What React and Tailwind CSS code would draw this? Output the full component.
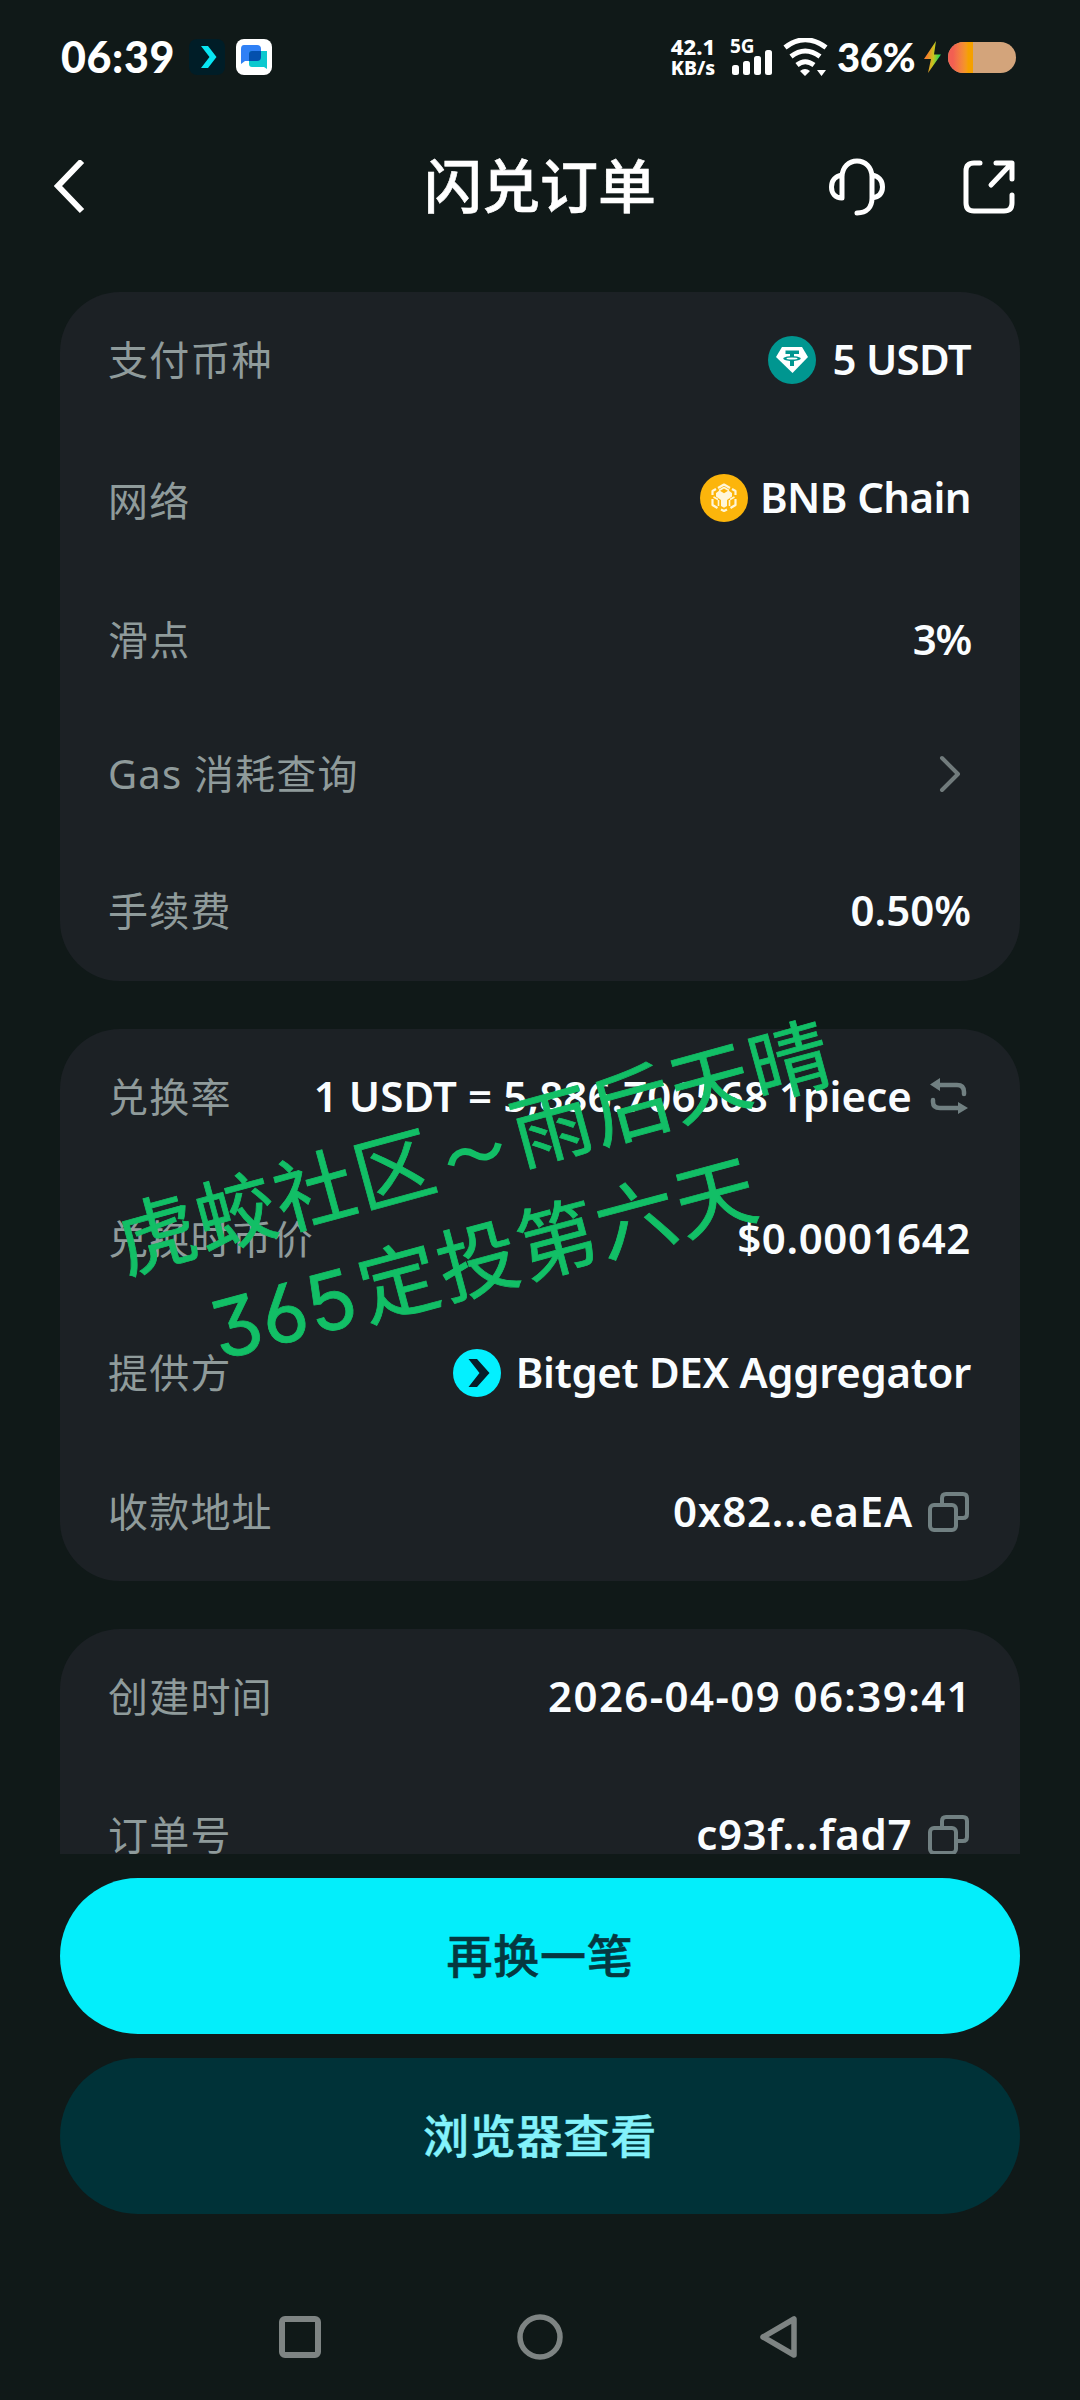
function StatusBar() {
  return (
    <div className="flex h-[114px] items-center pl-[61px] pr-[64px] text-white">
      <span className='w-[114px] whitespace-nowrap pb-[2px] font-["Lato","Noto_Sans_CJK_SC",sans-serif] text-[43px] font-black leading-none tracking-[0.6px]'>06:39</span>
      <svg className="ml-[14px] block" width="36" height="36" viewBox="0 0 36 36">
        <rect width="36" height="36" rx="8" fill="#001d27" />
        <path d="M12 7h7l8.500 11-8.500 11h-7l8.500-11z" fill="#08e6f4" />
      </svg>
      <svg className="ml-[11px] block" width="36" height="36" viewBox="0 0 36 36">
        <rect width="36" height="36" rx="8" fill="#fff" />
        <path d="M8 6h13q4 0 4 4v8q0 4-4 4H9l-4 3V10q0-4 3-4z" fill="#2f80f5" />
        <path d="M16 12h15v18l-3-2H16q-3 0-3-3V15q0-3 3-3z" fill="#0cc9cf" />
        <path d="M16 12h9v6q0 4-4 4h-8v-7q0-3 3-3z" fill="#0450ad" />
      </svg>
      <div className='ml-auto flex w-[46px] flex-col items-center font-["Noto_Sans",sans-serif] font-extrabold leading-[21px]'>
        <div className="whitespace-nowrap text-[22px]">42.1</div>
        <div className="whitespace-nowrap text-[19.5px]">KB/s</div>
      </div>
      <div className='relative ml-[14px] h-[38px] w-[44px] font-["Noto_Sans",sans-serif] text-[19px] font-bold leading-[16px]'>
        <span className="absolute left-0 top-0">5G</span>
        <svg className="block" width="44" height="38" viewBox="0 0 44 38">
          <g fill="#fff">
            <rect x="2" y="27" width="7" height="10" rx="2.500" />
            <rect x="13" y="23" width="7" height="14" rx="2.500" />
            <rect x="24" y="18" width="7" height="19" rx="2.500" />
            <rect x="35" y="12" width="7" height="25" rx="2.500" />
          </g>
        </svg>
      </div>
      <svg className="ml-[9px] block" width="46" height="38" viewBox="0 0 46 38" fill="none" stroke="#fff" strokeWidth="5">
        <path d="M2 9.500Q22-6 43 9.500M8 18.500q14-11 29 0M14 27q8-6.500 17 0" />
        <path d="M17 33q5-4 10 0l-5 5zM34 32h9l-4.500 6z" fill="#fff" stroke="none" />
      </svg>
      <span className='ml-[8px] w-[78px] whitespace-nowrap font-["Lato",sans-serif] text-[40px] font-black leading-none tracking-[-0.5px]'>36%</span>
      <svg className="ml-[9px] block" width="17" height="32" viewBox="0 0 17 32">
        <defs>
          <linearGradient id="bolt" x1="0" x2="1" y1="0.400" y2="0.600">
            <stop offset="0.200" stopColor="#f5822b" />
            <stop offset="0.550" stopColor="#c8c51e" />
            <stop offset="0.900" stopColor="#22d957" />
          </linearGradient>
        </defs>
        <path d="M12 0L0 18h7L4 32l13-18.500H10z" fill="url(#bolt)" />
      </svg>
      <div className="ml-[7px] h-[31px] w-[68px] overflow-hidden rounded-full bg-[#d3a47b]">
        <div className="h-full w-[25px] bg-linear-to-r from-[#f25f52] from-20% to-[#f5a000] to-80%" />
      </div>
    </div>
  );
}

function Header() {
  return (
    <div className="flex h-[146px] items-center pl-[54px] pr-[65px]">
      <svg className="block w-[170px]" width="170" height="54" viewBox="0 0 170 54" fill="none" stroke="#fff" strokeWidth="6">
        <path d="M28 1L4 26l24 25" />
      </svg>
      <h1 className='flex-1 pb-[9px] pl-[27px] text-center font-["Noto_Sans_CJK_SC",sans-serif] text-[58px] font-medium leading-none text-white [-webkit-text-stroke:0.6px]'>闪兑订单</h1>
      <svg className="block" width="56" height="58" viewBox="0 0 56 58" fill="none" stroke="#fff" strokeWidth="5" strokeLinecap="round" strokeLinejoin="round">
        <path d="M13 40V19C13 9 20 3 28 3s15 6 15 16v21c0 9-5 15-15 15M13 17C6 18 2.500 23 2.500 29S6 40 13 40M43 17c7 1 10.500 6 10.500 12S50 39 43 40" />
      </svg>
      <svg className="ml-[78px] block" width="52" height="54" viewBox="0 0 52 54" fill="none" stroke="#fff" strokeWidth="5" strokeLinecap="round" strokeLinejoin="round">
        <path d="M17 3h-6q-8 0-8 8v32q0 8 8 8h30q8 0 8-8v-8M33 3h16v16M48 4L28 25" />
      </svg>
    </div>
  );
}

const UsdtIcon = () => (
  <svg className="block" width="48" height="48" viewBox="0 0 48 48">
    <circle cx="24" cy="24" r="24" fill="#009690" />
    <path d="M14 11h20l6 10-15.500 16L8 21z" fill="#fff" />
    <path d="M17.500 14.500h13.500v3.500h-5v2.200c9 .6 9 4.100 0 4.700V30h-4v-5.100c-9-.6-9-4.100 0-4.700V18h-4.500z" fill="#009690" />
    <ellipse cx="24" cy="22.500" rx="5.500" ry="1" fill="#fff" />
  </svg>
);

const BnbIcon = () => (
  <svg className="block" width="48" height="48" viewBox="0 0 48 48">
    <circle cx="24" cy="24" r="24" fill="#fcb50b" />
    <g fill="none" stroke="#fff6d8" strokeWidth="2.200" strokeLinejoin="round">
      <path d="M18 14l6-3.500 6 3.500M32 15l3.500 2v4M35.500 25v6l-5 3M27 35.500L24 37l-3-1.500M17.500 34l-5-3v-6M12.500 21v-4l3.500-2" />
      <path d="M19 16.500l5-3 5 3M13.500 23l4.500 2.500M34.500 23L30 25.500M18.500 26v6M29.500 26v6" strokeWidth="1.600" />
    </g>
    <path d="M16 19l3.500-2.500 4.500 2.800 4.500-2.800L32 19v3.500l-5 3.500V32l-3 1.800-3-1.800v-6l-5-3.500z" fill="#fff6d8" />
  </svg>
);

const BitgetIcon = () => (
  <svg className="block" width="48" height="48" viewBox="0 0 48 48">
    <circle cx="24" cy="24" r="24" fill="#03f0ff" />
    <path d="M15.500 10h8.500L36.500 24 24 38h-8.500L26.500 24z" fill="#061c28" />
  </svg>
);

const ChevronIcon = () => (
  <svg className="mr-[9px] block" width="24" height="40" viewBox="0 0 24 40" fill="none" stroke="#717b7c" strokeWidth="4" strokeLinecap="round" strokeLinejoin="round">
    <path d="M4 4l16 16L4 36" />
  </svg>
);

const SwapIcon = () => (
  <svg className="mr-[2px] block" width="40" height="40" viewBox="0 0 40 40">
    <path d="M9 8h19q7 0 7 7v2M4 23v2q0 6 7 6h20" fill="none" stroke="#718082" strokeWidth="4.500" strokeLinecap="round" />
    <path d="M11 1v13L1 7.500zM29 25v12l10-6z" fill="#718082" />
  </svg>
);

const CopyIcon = () => (
  <svg className="mr-[2px] block" width="42" height="42" viewBox="0 0 42 42" fill="none" stroke="#718082" strokeWidth="4">
    <rect x="3" y="14" width="26" height="25" rx="4" />
    <path d="M15 13V7q0-4 4-4h17q4 0 4 4v16q0 4-4 4h-6" />
  </svg>
);

function Row({ label, height, shift = "", spacing = "", children }) {
  return (
    <div className={`flex items-center justify-between pb-[3px] ${height}`}>
      <span className={`whitespace-nowrap text-[40px] leading-none tracking-[1.2px] text-[#8f9b9b] ${shift}`}>{label}</span>
      <span className={`flex items-center whitespace-nowrap text-[42px] font-semibold leading-none text-[#fafdff] ${spacing}`}>{children}</span>
    </div>
  );
}

const Value = ({ className = "", children }) => <span className={`pb-[2px] ${className}`}>{children}</span>;

function Card({ height, children }) {
  return <section className={`shrink-0 rounded-[60px] bg-[#1c2125] pl-[48px] pr-[49px] ${height}`}>{children}</section>;
}

export default function App() {
  return (
    <div className='relative flex h-[2400px] w-[1080px] flex-col overflow-hidden bg-[#101918] font-["Noto_Sans","Noto_Sans_CJK_SC",sans-serif]'>
      <StatusBar />
      <Header />
      <main className="mx-[60px] flex h-[1594px] flex-col gap-[48px] overflow-hidden pt-[32px]">
        <Card height="h-[689px]">
          <Row label="支付币种" height="h-[138px]" spacing="tracking-[-0.7px]"><UsdtIcon /><Value className="ml-[16px]">5 USDT</Value></Row>
          <Row label="网络" height="h-[138px]" shift="pt-[6px]" spacing="tracking-[-0.6px]"><BnbIcon /><Value className="ml-[12px]">BNB Chain</Value></Row>
          <Row label="滑点" height="h-[146px]" spacing="tracking-[-1.2px]"><Value>3%</Value></Row>
          <Row label="Gas 消耗查询" height="h-[122px]"><ChevronIcon /></Row>
          <Row label="手续费" height="h-[153px]"><Value>0.50%</Value></Row>
        </Card>
        <Card height="h-[552px]">
          <Row label="兑换率" height="h-[138px]" spacing="tracking-[0.1px]"><Value className="mr-[17px]">1 USDT = 5,886.706568 1piece</Value><SwapIcon /></Row>
          <Row label="兑换时币价" height="h-[146px]" spacing="tracking-[0.6px]"><Value>$0.0001642</Value></Row>
          <Row label="提供方" height="h-[122px]" spacing="tracking-[-0.33px]"><BitgetIcon /><Value className="ml-[15px]">Bitget DEX Aggregator</Value></Row>
          <Row label="收款地址" height="h-[156px]" spacing="tracking-[0.8px]"><Value className="mr-[14px]">0x82...eaEA</Value><CopyIcon /></Row>
        </Card>
        <Card height="h-[400px]">
          <Row label="创建时间" height="h-[138px]" spacing="tracking-[1.4px]"><Value className="-mr-[1px]">2026-04-09 06:39:41</Value></Row>
          <Row label="订单号" height="h-[138px]" spacing="tracking-[0.6px]"><Value className="mr-[15px]">c93f...fad7</Value><CopyIcon /></Row>
        </Card>
      </main>
      <div className='mx-[60px] mt-[24px] flex flex-col gap-[24px] font-["Noto_Sans_CJK_SC",sans-serif] text-[46px] font-medium leading-none tracking-[0.8px] [-webkit-text-stroke:0.5px]'>
        <button className="h-[156px] rounded-full bg-[#03eefb] pb-[7px] text-[#053840]">再换一笔</button>
        <button className="h-[156px] rounded-full bg-[#003238] pb-[7px] text-[#83f2fb]">浏览器查看</button>
      </div>
      <nav className="mt-[98px] flex items-center justify-center gap-[192px]">
        <svg className="block" width="48" height="50" viewBox="0 0 48 50" fill="none" stroke="#7e8483" strokeWidth="6">
          <rect x="6" y="7" width="36" height="36" rx="3" />
        </svg>
        <svg className="block" width="48" height="50" viewBox="0 0 48 50" fill="none" stroke="#7e8483" strokeWidth="5.500">
          <circle cx="24" cy="25" r="20" />
        </svg>
        <svg className="block" width="48" height="50" viewBox="0 0 48 50" fill="none" stroke="#7e8483" strokeWidth="5.500" strokeLinejoin="round">
          <path d="M38 7v36L7 25z" />
        </svg>
      </nav>
      <div className='absolute left-[115px] top-[1183px] origin-[40px_46px] -rotate-[15.300deg] whitespace-nowrap font-["Noto_Sans_CJK_SC",sans-serif] text-[80px] leading-[92px] tracking-[2px] text-[#12bf66] [-webkit-text-stroke:0.8px]'>
        虎蛟社区<span className="inline-block w-[82px] text-center text-[60px] leading-[80px] [-webkit-text-stroke:2px]">～</span>雨后天晴
      </div>
      <div className='absolute left-[210px] top-[1274px] origin-[26px_46px] -rotate-[15deg] whitespace-nowrap font-["Noto_Sans_CJK_SC",sans-serif] text-[80px] leading-[92px] tracking-[2px] text-[#12bf66] [-webkit-text-stroke:0.8px]'>
        <span className='mr-[5px] font-["Inter",sans-serif] text-[80px] tracking-[1px] [font-feature-settings:"cv09","cv03"]'>365</span>定投第六天
      </div>
    </div>
  );
}
